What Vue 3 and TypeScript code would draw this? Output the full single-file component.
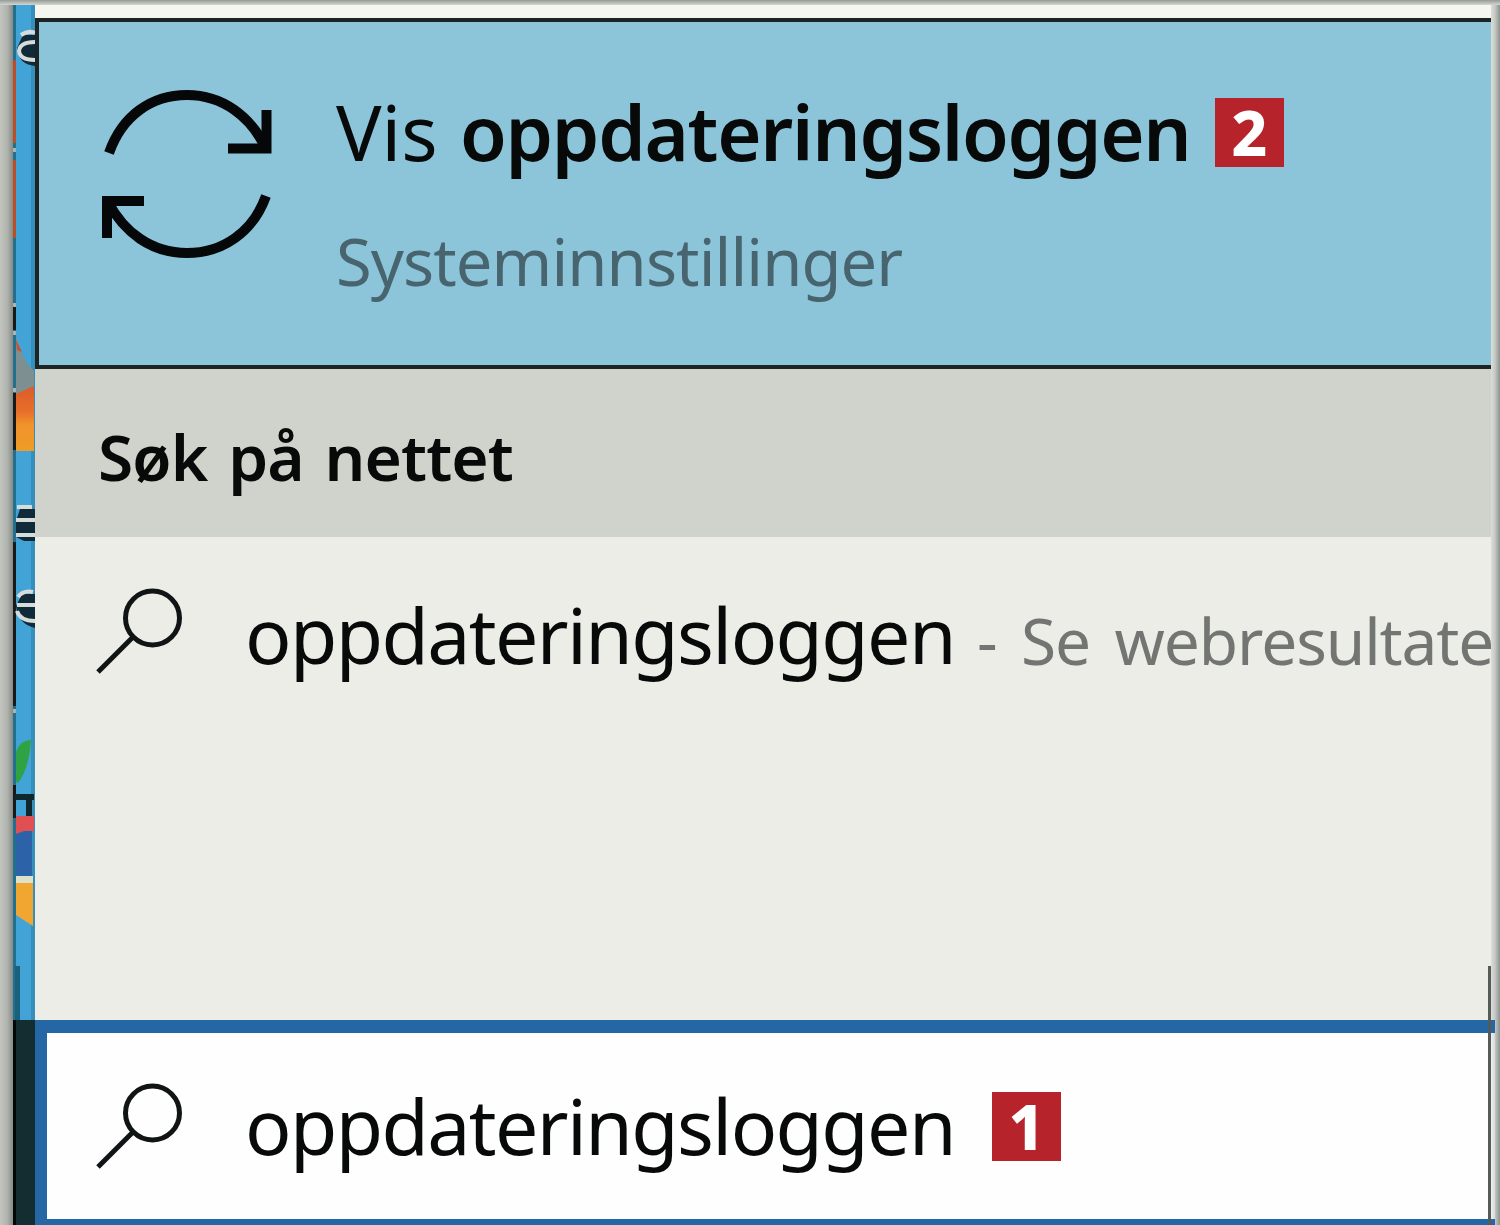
<template>
  <div class="screen">
    <div class="edge edge-left"></div>
    <svg class="desktop" width="22" height="1220" viewBox="13 5 22 1220">
      <defs>
        <linearGradient id="flame" x1="0" y1="0" x2="0" y2="1">
          <stop offset="0" stop-color="#dc5a2b" />
          <stop offset="0.400" stop-color="#e8702a" />
          <stop offset="0.600" stop-color="#f0942a" />
          <stop offset="1" stop-color="#ee9c28" />
        </linearGradient>
      </defs>
      <rect x="13" y="5" width="22" height="1220" fill="#42a3d6" />
      <rect x="31" y="5" width="4" height="1015" fill="#2f82a8" opacity="0.6" />
      <rect x="13" y="5" width="3" height="1015" fill="#226f92" />
      <!-- icon edges and clipped labels on the desktop behind the panel -->
      <path d="M14.500 60V143M14.500 160V238" stroke="#b94f28" stroke-width="3" />
      <path d="M14.500 307V330M14.500 393V450M14.500 542V706M14.500 785V818" stroke="#17191a" stroke-width="3" />
      <path d="M13 150H16M13 305H16M13 333H16M13 390H16M13 711H16" stroke="#a9b5b5" stroke-width="4" />
      <g v-for="label in labels" :key="label.shade">
        <path :d="label.shade" fill="#102a3a" />
        <path :d="label.glyph" fill="none" stroke="#d6dcda" stroke-width="4" />
      </g>
      <path d="M16 335Q22 360 34 371V395H16Z" fill="#7d8f91" />
      <path d="M16 340L22 352L17 350Z" fill="#c65230" />
      <path d="M16 394L34 386V451H16Z" fill="url(#flame)" />
      <path d="M16 782V752Q20 740 31 740Q29 769 18 783Z" fill="#2fa343" />
      <path d="M15 797H34M29 797V816" fill="none" stroke="#10272e" stroke-width="6" />
      <path d="M16 816H34V831H24L16 835Z" fill="#e04f51" />
      <path d="M16 834L24 831H32V876H16Z" fill="#2b62a8" />
      <rect x="16" y="876" width="17" height="7" fill="#dfe0c9" />
      <path d="M16 883H33V926L16 915Z" fill="#f2a632" />
      <rect x="15" y="966" width="5" height="54" fill="#17617c" />
      <rect x="13" y="1020" width="22" height="205" fill="#132d31" />
      <rect x="13" y="1020" width="3" height="205" fill="#020808" />
    </svg>

    <main class="panel">
      <section class="best-match">
        <svg class="sync" width="180" height="180" viewBox="97 84 180 180">
          <g fill="none" stroke="#050708" stroke-width="10">
            <path d="M109 153C122 116 151 95 187 95C222 95 251 116 266 149" />
            <path d="M228 148.500H266.500V110" />
            <path d="M266 196C253 232 223 253 187 253C151 253 124 232 108 202" />
            <path d="M144 201H107V238" />
          </g>
        </svg>
        <div class="match-text">
          <div class="match-title">
            <span class="prefix">Vis</span>
            <span class="term">oppdateringsloggen</span>
            <span class="badge">2</span>
          </div>
          <div class="match-type">Systeminnstillinger</div>
        </div>
      </section>

      <h2 class="section-title">Søk på nettet</h2>

      <section class="web-results">
        <div class="result">
          <svg class="magnifier" width="90" height="90" viewBox="0 0 90 90">
            <circle cx="56.500" cy="31" r="27" />
            <path d="M37 50L2 85" />
          </svg>
          <span class="query">{{ query }}</span>
          <span class="hint">- Se webresultate</span>
        </div>
      </section>

      <section class="search-box">
        <svg class="magnifier" width="90" height="90" viewBox="0 0 90 90">
          <circle cx="56.500" cy="31" r="27" />
          <path d="M37 50L2 85" />
        </svg>
        <span class="query">{{ query }}</span>
        <span class="badge">1</span>
      </section>
    </main>
    <div class="edge edge-right"></div>
    <div class="window-line"></div>
  </div>
</template>

<script setup lang="ts">
import { ref } from "vue";

interface Label {
  shade: string;
  glyph: string;
}

const query = ref<string>("oppdateringsloggen");

const labels: Label[] = [
  {
    shade: "M35 35H23L17 48Q18 64 35 66Z",
    glyph: "M21 35Q28 30 35 33M35 42Q20 42 19 51Q20 60 35 60",
  },
  {
    shade: "M35 509H20L16 521V537L24 541H35Z",
    glyph: "M17 507H32M16 520H35M16 535H35",
  },
  {
    shade: "M35 594H22L16 606Q18 624 35 628Z",
    glyph: "M18 597Q23 590 33 592M35 605H17M17 611Q20 621 35 621",
  },
];
</script>

<style>
body {
  background: #b8bbb5;
  overflow: hidden;
}
</style>

<style scoped>
.screen {
  position: relative;
  display: grid;
  grid-template-columns: 13px 22px 1456px 9px;
  width: 1500px;
  height: 1225px;
  padding-top: 5px;
  box-sizing: border-box;
  overflow: hidden;
  background: linear-gradient(#969b96, #d4d6d0 5px);
  font-family: "Noto Sans", "Open Sans", sans-serif;
  color: #080a0a;
}

.edge-left {
  background: linear-gradient(90deg, #c3c5bf, #b2b5af 7px, #858a86);
}

.edge-right {
  background: linear-gradient(90deg, #dddeda, #c5c8c4 4px, #8b918d);
}

.desktop {
  display: block;
}

.panel {
  display: grid;
  grid-template-rows: 351px 168px 483px 205px;
  padding-top: 13px;
  background: #f5f6f0;
  height: 1220px;
  box-sizing: border-box;
  min-width: 0;
}

.best-match {
  display: flex;
  box-sizing: border-box;
  border: 4px solid #1c2424;
  border-right: none;
  background: #8cc5da;
  padding: 62px 0 0 58px;
}

.sync {
  flex: none;
}

.match-text {
  margin-left: 59px;
}

.match-title {
  display: flex;
  align-items: center;
  height: 106px;
  margin-top: -5px;
  font-size: 76px;
  line-height: 102px;
  white-space: nowrap;
}

.prefix {
  width: 124px;
}

.term {
  width: 755px;
  font-weight: 600;
  letter-spacing: -1.3px;
}

.match-type {
  margin-top: 31px;
  font-size: 65px;
  line-height: 90px;
  color: #48656f;
  letter-spacing: -0.9px;
}

.badge {
  flex: none;
  width: 69px;
  height: 69px;
  background: #b7232b;
  color: #fff;
  font-size: 62px;
  font-weight: 800;
  line-height: 69px;
  text-align: center;
}

.section-title {
  margin: 0;
  padding-left: 63px;
  background: #d0d3cb;
  font-size: 64px;
  font-weight: 600;
  line-height: 175px;
  letter-spacing: -0.9px;
  word-spacing: 5px;
}

.web-results {
  background: #ecede7;
  padding: 50px 0 0 61px;
  overflow: hidden;
}

.result,
.search-box {
  display: flex;
  white-space: nowrap;
}

.magnifier {
  flex: none;
  fill: none;
  stroke: #101414;
  stroke-width: 5;
}

.query {
  flex: none;
  width: 732px;
  margin-left: 59px;
  font-size: 77px;
  line-height: 95px;
  letter-spacing: -1.6px;
}

.hint {
  font-size: 64px;
  line-height: 107px;
  color: #727572;
  letter-spacing: -1.1px;
  word-spacing: 9px;
}

.search-box {
  position: relative;
  z-index: 1;
  width: 1460px;
  box-sizing: border-box;
  border: 12px solid #2566a5;
  border-top-width: 13px;
  border-right: none;
  border-bottom-width: 6px;
  padding: 49px 0 0 49px;
  background: linear-gradient(90deg, #fefefe 1442px, #d5dad8);
}

.search-box .query {
  line-height: 87px;
}

.search-box .badge {
  margin: 10px 0 0 15px;
}

/* border of the window that continues below the result list */
.window-line {
  position: absolute;
  z-index: 2;
  left: 1488px;
  top: 966px;
  width: 3px;
  height: 259px;
  background: #555b58;
}
</style>
